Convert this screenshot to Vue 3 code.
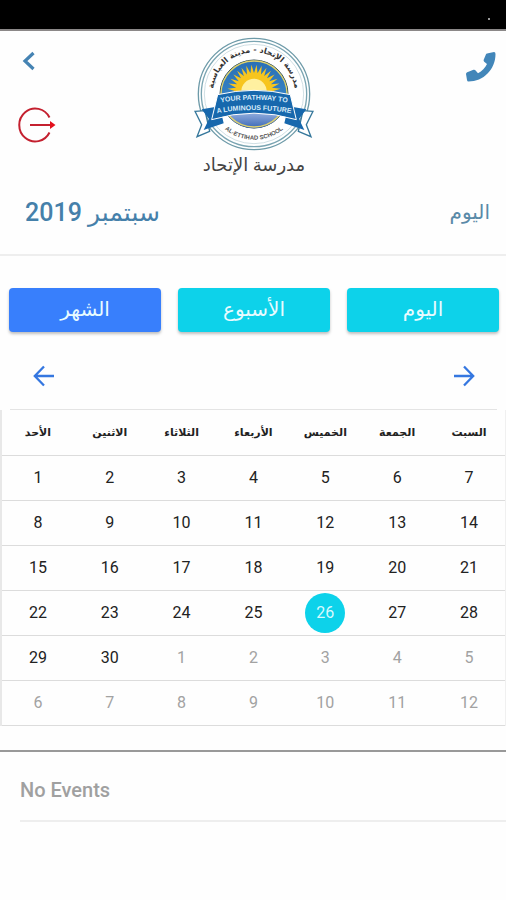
<template>
  <div class="page">
    <div class="status-bar"><span class="status-mark"></span></div>

    <header class="header">
      <div class="top-row">
        <div class="side">
          <button class="icon-btn back" aria-label="Back">
            <svg width="14" height="20" viewBox="0 0 14 20">
              <path d="M11.500 2 3 10l8.500 8" fill="none" stroke="#4583b3" stroke-width="3.200" />
            </svg>
          </button>
          <button class="icon-btn logout" aria-label="Logout">
            <svg width="38" height="36" viewBox="0 0 38 36">
              <path d="M31.500 10.500A16 16.500 0 1 0 31.500 25.500" fill="none" stroke="#c4202f" stroke-width="2" />
              <path d="M12 18h20" stroke="#c4202f" stroke-width="2" />
              <path d="M32 14 37.500 18 32 22z" fill="#e3101c" />
            </svg>
          </button>
        </div>

        <div class="brand">
          <svg class="logo" width="120" height="116" viewBox="45 32 360 348" role="img" aria-label="Al-Ettihad School">
            <defs>
              <path id="arc-top" d="M102 204A123 123 0 0 1 348 204" />
              <path id="arc-bottom" d="M125 300A137 137 0 0 0 325 300" />
              <path id="ribbon-1" d="M118 233Q225 213 332 233" />
              <path id="ribbon-2" d="M102 266Q225 242 348 266" />
              <linearGradient id="sky" x1="0" y1="0" x2="0" y2="1">
                <stop offset="0" stop-color="#2a6fb5" />
                <stop offset="1" stop-color="#3f93d2" />
              </linearGradient>
              <linearGradient id="sea" x1="0" y1="0" x2="0" y2="1">
                <stop offset="0.400" stop-color="#a9c0e8" />
                <stop offset="1" stop-color="#3a67b6" />
              </linearGradient>
            </defs>
            <circle cx="225" cy="206" r="167" fill="#fff" stroke="#6d9aa8" stroke-width="4" />
            <circle cx="225" cy="206" r="158" fill="none" stroke="#7ba5b2" stroke-width="4" />
            <circle cx="225" cy="206" r="149" fill="none" stroke="#b8ced6" stroke-width="2" />
            <circle cx="225" cy="206" r="102" fill="url(#sky)" stroke="#334c55" stroke-width="3" />
            <path d="M126 210a99 99 0 0 0 198 0z" fill="url(#sea)" />
            <circle cx="225" cy="206" r="99" fill="none" stroke="#e2d36b" stroke-width="4" />
            <polygon :points="rays" fill="#f7c51e" />
            <circle cx="225" cy="198" r="38" fill="#fff0a0" />
            <path d="M48 258 78 256 92 318 54 334 68 298z" fill="#fff" stroke="#35779b" stroke-width="4" />
            <path d="M402 258 372 256 358 318 396 334 382 298z" fill="#fff" stroke="#35779b" stroke-width="4" />
            <path d="M68 252 122 243 134 294 74 314 90 281z" fill="#1768ad" />
            <path d="M382 252 328 243 316 294 376 314 360 281z" fill="#1768ad" />
            <path d="M116 208Q225 182 334 208L352 283Q225 244 98 283z" fill="#1768ad" stroke="#fff" stroke-width="3" />
            <text class="ribbon-text"><textPath href="#ribbon-1" startOffset="50%">YOUR PATHWAY TO</textPath></text>
            <text class="ribbon-text"><textPath href="#ribbon-2" startOffset="50%">A LUMINOUS FUTURE</textPath></text>
            <text class="ring-ar"><textPath href="#arc-top" startOffset="50%">مدرسة الإتحاد - مدينة العباسية</textPath></text>
            <text class="ring-en"><textPath href="#arc-bottom" startOffset="50%">AL-ETTIHAD SCHOOL</textPath></text>
          </svg>
          <h1 class="school" dir="rtl">مدرسة الإتحاد</h1>
        </div>

        <div class="side right">
          <button class="icon-btn phone" aria-label="Call">
            <svg width="30" height="30" viewBox="0 0 30 30">
              <path d="M21 1.500 28 0Q29.500 0 29.500 2C29.500 17.500 17.500 29.500 2.500 29.500Q1.200 29.500 1 28L0 22Q0 20.800 1.200 20.200L7.500 17.800Q8.800 17.400 9.600 18.400L12 21.200C16 19.200 19.200 16 21 12L18.200 9.700Q17.300 8.900 17.700 7.700L20 2.200Q20.300 1.600 21 1.500z" fill="#4286b9" />
            </svg>
          </button>
        </div>
      </div>

      <div class="title-row">
        <h2 class="month" dir="rtl">سبتمبر 2019</h2>
        <button class="today">اليوم</button>
      </div>
    </header>

    <div class="modes">
      <button
        v-for="item in modes"
        :key="item.id"
        class="mode-btn"
        :class="{ active: mode === item.id }"
        @click="mode = item.id"
      >
        {{ item.label }}
      </button>
    </div>

    <div class="nav">
      <button class="icon-btn" aria-label="Previous month">
        <svg width="22" height="22" viewBox="0 0 22 22">
          <path d="M21 11H2.500M11 1.500 1.800 11l9.200 9.500" fill="none" stroke="#3577e0" stroke-width="2.300" />
        </svg>
      </button>
      <button class="icon-btn" aria-label="Next month">
        <svg width="22" height="22" viewBox="0 0 22 22">
          <path d="M1 11h18.500M11 1.500l9.200 9.500-9.200 9.500" fill="none" stroke="#3577e0" stroke-width="2.300" />
        </svg>
      </button>
    </div>

    <table class="calendar">
      <thead>
        <tr>
          <th v-for="name in weekdays" :key="name" scope="col">{{ name }}</th>
        </tr>
      </thead>
      <tbody>
        <tr v-for="(week, w) in weeks" :key="w">
          <td v-for="(cell, d) in week" :key="d" :class="{ muted: cell.muted }" @click="select(cell)">
            <span class="day" :class="{ selected: !cell.muted && cell.day === selected }">{{ cell.day }}</span>
          </td>
        </tr>
      </tbody>
    </table>

    <section class="events">
      <p class="empty">No Events</p>
    </section>
  </div>
</template>

<script setup>
import { ref } from 'vue'

const modes = [
  { id: 'month', label: 'الشهر' },
  { id: 'week', label: 'الأسبوع' },
  { id: 'day', label: 'اليوم' },
]
const weekdays = ['الأحد', 'الاثنين', 'الثلاثاء', 'الأربعاء', 'الخميس', 'الجمعة', 'السبت']

const mode = ref('month')
const selected = ref(26)

// September 2019 starts on a Sunday and has 30 days
const weeks = Array.from({ length: 6 }, (_, w) =>
  Array.from({ length: 7 }, (_, d) => {
    const n = w * 7 + d + 1
    return n > 30 ? { day: n - 30, muted: true } : { day: n, muted: false }
  }),
)

const select = (cell) => {
  if (!cell.muted) selected.value = cell.day
}

// half sun, alternating long and short points
const rays = Array.from({ length: 33 }, (_, i) => {
  const angle = Math.PI + (i * Math.PI) / 32
  const r = i % 2 ? 80 : 55
  return `${(225 + r * Math.cos(angle)).toFixed(1)},${(198 + r * Math.sin(angle)).toFixed(1)}`
}).join(' ')
</script>

<style>
body {
  margin: 0;
  background: #fefefe;
}
</style>

<style scoped>
.page {
  font-family: Roboto, 'DejaVu Sans', sans-serif;
  color: #222;
}

button {
  font-family: inherit;
  border: 0;
  padding: 0;
  background: none;
  cursor: pointer;
}

h1,
h2,
p {
  margin: 0;
  font-weight: 400;
}

.status-bar {
  display: flex;
  justify-content: flex-end;
  align-items: center;
  height: 29px;
  padding: 0 16px;
  background: #000;
  border-bottom: 2px solid #8b8888;
}

.status-mark {
  width: 2px;
  height: 2px;
  margin-top: 8px;
  background: #999;
}

.header {
  border-bottom: 2px solid #eee;
}

.top-row {
  display: flex;
  justify-content: space-between;
  padding: 5px 10px 0 18px;
}

.side {
  display: flex;
  flex: 1;
  flex-direction: column;
  align-items: flex-start;
}

.side.right {
  align-items: flex-end;
}

.icon-btn {
  display: flex;
}

.back {
  margin: 15px 0 0 4px;
}

.logout {
  margin-top: 36px;
}

.phone {
  margin-top: 16px;
}

.brand {
  display: flex;
  flex-direction: column;
  align-items: center;
  padding-right: 6px;
}

.logo {
  display: block;
}

.ribbon-text {
  font: bold 21px 'Liberation Sans', sans-serif;
  fill: #d9ecfa;
  text-anchor: middle;
}

.ring-ar {
  font: bold 24px 'DejaVu Sans', sans-serif;
  fill: #333;
  text-anchor: middle;
}

.ring-en {
  font: bold 18px 'Liberation Sans', sans-serif;
  fill: #555;
  text-anchor: middle;
}

.school {
  font-size: 18px;
  line-height: 26px;
  color: #444;
}

.title-row {
  display: flex;
  justify-content: space-between;
  align-items: center;
  height: 68px;
  padding: 0 16px 8px 25px;
}

.month {
  font-size: 25px;
  font-weight: 500;
  color: #4580aa;
}

.today {
  font-size: 20px;
  color: #5a8aa8;
}

.modes {
  display: grid;
  grid-template-columns: repeat(3, 1fr);
  gap: 17px;
  padding: 32px 7px 0 9px;
}

.mode-btn {
  height: 44px;
  padding-bottom: 2px;
  border-radius: 4px;
  background: #0dd2ea;
  box-shadow: 0 2px 3px rgba(0, 0, 0, 0.25);
  color: #e8fbff;
  font-size: 20px;
}

.mode-btn.active {
  background: #387ffc;
}

.nav {
  display: flex;
  justify-content: space-between;
  align-items: center;
  margin: 0 9px 0 10px;
  padding: 33px 22px 22px 23px;
  border-bottom: 1px solid #e4e4e4;
}

.calendar {
  width: 100%;
  table-layout: fixed;
  border-collapse: separate;
  border-spacing: 0;
  border-left: 2px solid #e8e8e8;
  border-right: 1px solid #f0f0f0;
}

.calendar th,
.calendar td {
  height: 44px;
  padding: 0;
  border-bottom: 1px solid #dcdcdc;
  text-align: center;
}

.calendar th {
  height: 45px;
  font-size: 11px;
  font-weight: 700;
}

.calendar td {
  font-size: 16px;
}

.calendar .muted {
  color: #a2a2a2;
}

.day {
  display: block;
  width: 40px;
  margin: 0 auto;
  border-radius: 50%;
  line-height: 40px;
}

.day.selected {
  background: #0dd2ea;
  color: #d9f9fd;
}

.events {
  margin-top: 24px;
  padding-left: 20px;
  border-top: 2px solid #999;
}

.empty {
  height: 68px;
  border-bottom: 2px solid #eee;
  font-size: 20px;
  font-weight: 500;
  line-height: 76px;
  color: #a0a0a0;
}
</style>
